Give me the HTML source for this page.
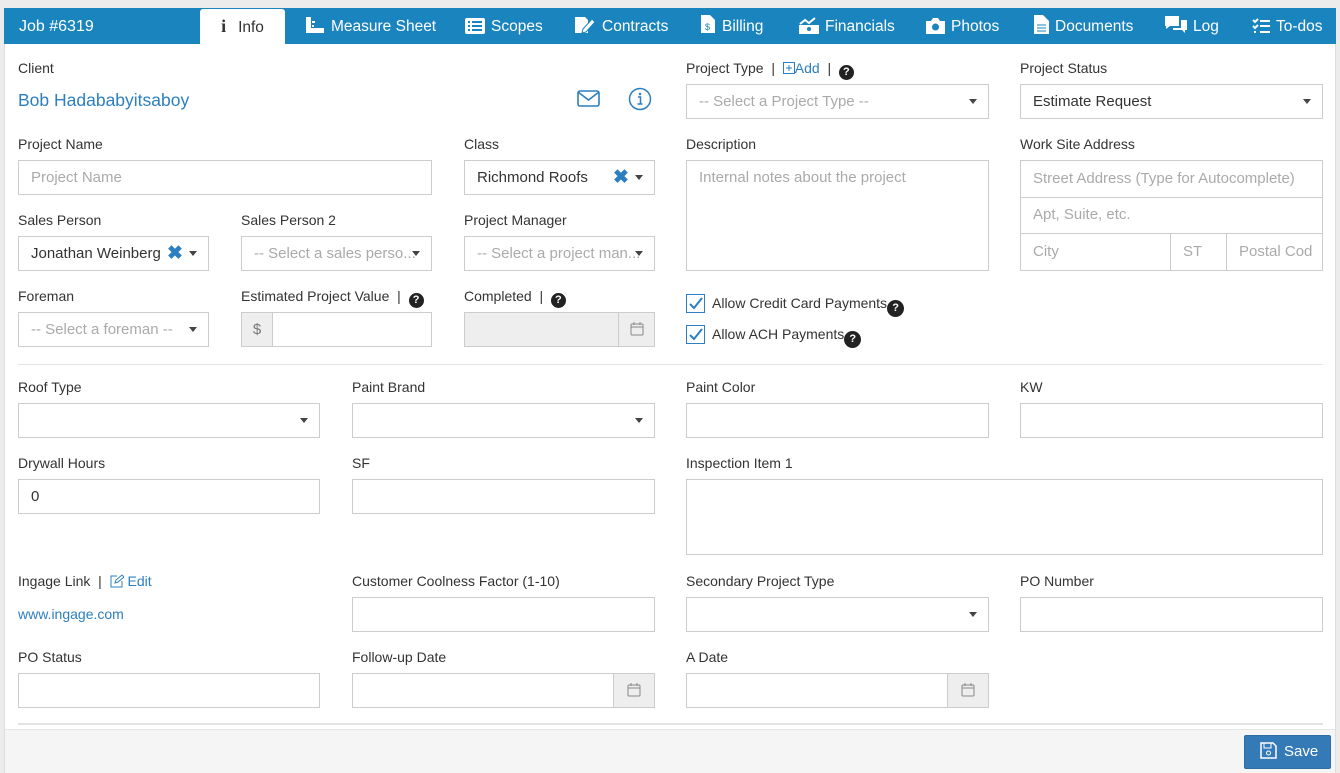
<!DOCTYPE html>
<html><head><style>
*{box-sizing:border-box;margin:0;padding:0}
body{width:1340px;height:773px;background:#ececec;font-family:"Liberation Sans",sans-serif;color:#333;position:relative;overflow:hidden}
.card{position:absolute;left:4px;top:8px;width:1332px;height:765px;background:#fff;border:1px solid #ddd}
.hdr{position:absolute;left:4px;top:8px;width:1332px;height:36px;background:#1a84bf}
.tab{position:absolute;top:8px;height:36px;line-height:37px;color:#fff;font-size:15.5px;white-space:nowrap}
.tab svg{vertical-align:-3px;margin-right:6px}
.info{background:#fff;color:#333;left:200px;width:85px;text-align:center;border-radius:3px 3px 0 0;top:9px;height:35px;line-height:35px}
.l{position:absolute;font-size:14px;color:#333;white-space:nowrap}
.i{position:absolute;height:35px;border:1px solid #ccc;background:#fff;font-size:15px;line-height:33px;padding-left:12px;color:#333;white-space:nowrap;overflow:hidden}
.ph{color:#aaa}
.car{position:absolute;right:11px;top:14px;width:0;height:0;border-left:4px solid transparent;border-right:4px solid transparent;border-top:5px solid #444}
.q{display:inline-block;width:15px;height:15px;border-radius:50%;background:#222;color:#fff;font-size:11px;font-weight:bold;text-align:center;line-height:15px;vertical-align:-2px}
.add{position:absolute;right:0;top:-1px;width:36px;height:35px;background:#eee;border-left:1px solid #ccc}
.add svg{position:absolute;left:11px;top:9px}
.hr{position:absolute;left:18px;width:1305px;height:1px;background:#e3e3e3}
.cb{position:absolute;width:19px;height:19px;border:1px solid #2c7fc0;background:#fff}
a{color:#2c7fc0;text-decoration:none}
</style></head><body>
<div class="card"></div>
<div class="hdr"></div>
<div class="tab" style="left:19px;font-size:16px">Job #6319</div>
<div class="tab info"><span style="font-family:'Liberation Serif',serif;font-weight:bold;font-size:18px;margin-right:12px">i</span>Info</div>
<div class="tab" style="left:305px"><svg width="20" height="18"><rect x="1" y="1" width="5" height="16" fill="#fff"/><rect x="1" y="12" width="18" height="5" fill="#fff"/><rect x="7" y="5" width="3" height="2" fill="#fff"/><rect x="7" y="9" width="2" height="2" fill="#fff"/></svg>Measure Sheet</div>
<div class="tab" style="left:465px"><svg width="20" height="16"><rect x="0" y="0" width="20" height="16" rx="2" fill="#fff"/><g fill="#1a84bf"><rect x="3" y="3" width="2" height="2"/><rect x="7" y="3" width="10" height="2"/><rect x="3" y="7" width="2" height="2"/><rect x="7" y="7" width="10" height="2"/><rect x="3" y="11" width="2" height="2"/><rect x="7" y="11" width="10" height="2"/></g></svg>Scopes</div>
<div class="tab" style="left:574px"><svg width="22" height="18"><path d="M1 1h10l3 3v13H1z" fill="#fff"/><path d="M9 13l9-10 3 3-9 10-4 1z" fill="#fff" stroke="#1a84bf"/></svg>Contracts</div>
<div class="tab" style="left:700px"><svg width="16" height="20"><path d="M1 1h9l5 5v13H1z" fill="#fff"/><text x="5" y="16" font-size="9" fill="#1a84bf" font-family="Liberation Sans">$</text></svg>Billing</div>
<div class="tab" style="left:799px"><svg width="20" height="18"><rect x="0" y="9" width="20" height="9" fill="#fff"/><path d="M1 8l5-4 4 3 6-5" stroke="#fff" stroke-width="2" fill="none"/><circle cx="10" cy="13" r="2" fill="#1a84bf"/></svg>Financials</div>
<div class="tab" style="left:926px"><svg width="19" height="16"><path d="M0 3h5l2-3h5l2 3h5v13H0z" fill="#fff"/><circle cx="9.5" cy="9" r="3.5" fill="#1a84bf"/></svg>Photos</div>
<div class="tab" style="left:1034px"><svg width="15" height="19"><path d="M0 0h9l6 6v13H0z" fill="#fff"/><path d="M3 10h9M3 13h9M3 16h9" stroke="#1a84bf"/></svg>Documents</div>
<div class="tab" style="left:1165px"><svg width="22" height="18"><path d="M0 0h14v10H5l-4 3v-3H0z" fill="#fff"/><path d="M16 4h6v10h-2v3l-3-3H8v-2h8z" fill="#fff"/></svg>Log</div>
<div class="tab" style="left:1252px"><svg width="18" height="16"><path d="M1 2l2 2 3-3M1 8l2 2 3-3M2 14h2M8 3h10M8 8h10M8 14h10" stroke="#fff" stroke-width="2" fill="none"/></svg>To-dos</div>

<div class="l" style="left:18px;top:60px">Client</div>
<div class="l" style="left:18px;top:90px;font-size:17.5px"><a>Bob Hadababyitsaboy</a></div>
<svg style="position:absolute;left:577px;top:90px" width="23" height="17"><rect x="1" y="1" width="21" height="15" rx="2" fill="none" stroke="#2c7fc0" stroke-width="1.6"/><path d="M1 2l10.5 8L22 2" fill="none" stroke="#2c7fc0" stroke-width="1.6"/></svg>
<svg style="position:absolute;left:628px;top:87px" width="24" height="24"><circle cx="12" cy="12" r="10.5" fill="none" stroke="#2c7fc0" stroke-width="1.5"/><circle cx="12" cy="7" r="1.3" fill="#2c7fc0"/><path d="M10 10h2.5v7M9.5 17h5" stroke="#2c7fc0" stroke-width="1.5" fill="none"/></svg>

<div class="l" style="left:686px;top:60px">Project Type &nbsp;| &nbsp;<a><svg width="12" height="12" style="vertical-align:-1px"><rect x=".5" y=".5" width="11" height="11" fill="none" stroke="#2c7fc0"/><path d="M6 3v6M3 6h6" stroke="#2c7fc0"/></svg>Add</a> &nbsp;| &nbsp;<span class="q">?</span></div>
<div class="i ph" style="left:686px;top:84px;width:303px">-- Select a Project Type --<span class="car"></span></div>
<div class="l" style="left:1020px;top:60px">Project Status</div>
<div class="i" style="left:1020px;top:84px;width:303px">Estimate Request<span class="car"></span></div>

<div class="l" style="left:18px;top:136px">Project Name</div>
<div class="i ph" style="left:18px;top:160px;width:414px">Project Name</div>
<div class="l" style="left:464px;top:136px">Class</div>
<div class="i" style="left:464px;top:160px;width:191px">Richmond Roofs<span style="position:absolute;left:148px;color:#2c7fc0;font-size:19px;font-weight:bold">✖</span><span class="car"></span></div>
<div class="l" style="left:686px;top:136px">Description</div>
<div class="i ph" style="left:686px;top:160px;width:303px;height:111px;line-height:34px">Internal notes about the project</div>
<div class="l" style="left:1020px;top:136px">Work Site Address</div>
<div class="i ph" style="left:1020px;top:160px;width:303px;height:38px;line-height:36px">Street Address (Type for Autocomplete)</div>
<div class="i ph" style="left:1020px;top:197px;width:303px;height:37px">Apt, Suite, etc.</div>
<div class="i ph" style="left:1020px;top:233px;width:151px;height:38px;line-height:36px">City</div>
<div class="i ph" style="left:1170px;top:233px;width:57px;height:38px;line-height:36px">ST</div>
<div class="i ph" style="left:1226px;top:233px;width:97px;height:38px;line-height:36px">Postal Cod</div>

<div class="l" style="left:18px;top:212px">Sales Person</div>
<div class="i" style="left:18px;top:236px;width:191px">Jonathan Weinberg<span style="position:absolute;left:148px;color:#2c7fc0;font-size:19px;font-weight:bold">✖</span><span class="car"></span></div>
<div class="l" style="left:241px;top:212px">Sales Person 2</div>
<div class="i ph" style="left:241px;top:236px;width:191px">-- Select a sales perso...<span class="car"></span></div>
<div class="l" style="left:464px;top:212px">Project Manager</div>
<div class="i ph" style="left:464px;top:236px;width:191px">-- Select a project man...<span class="car"></span></div>

<div class="l" style="left:18px;top:288px">Foreman</div>
<div class="i ph" style="left:18px;top:312px;width:191px">-- Select a foreman --<span class="car"></span></div>
<div class="l" style="left:241px;top:288px">Estimated Project Value &nbsp;| &nbsp;<span class="q">?</span></div>
<div class="i ph" style="left:241px;top:312px;width:191px;padding-left:0"><span style="display:inline-block;width:31px;height:33px;background:#eee;border-right:1px solid #ccc;text-align:center;color:#777">$</span></div>
<div class="l" style="left:464px;top:288px">Completed &nbsp;| &nbsp;<span class="q">?</span></div>
<div class="i" style="left:464px;top:312px;width:191px;background:#eee"><span class="add" style="background:#eee"><svg width="14" height="15"><rect x="1" y="3" width="12" height="11" rx="1" fill="none" stroke="#888"/><path d="M1 6h12M4 1v3M10 1v3" stroke="#888"/></svg></span></div>

<div class="cb" style="left:686px;top:294px"><svg width="17" height="17"><path d="M3 9l4 4 8-10" stroke="#2c7fc0" stroke-width="2" fill="none"/></svg></div>
<div class="l" style="left:712px;top:295px">Allow Credit Card Payments<span class="q" style="width:17px;height:17px;line-height:17px;vertical-align:-3px">?</span></div>
<div class="cb" style="left:686px;top:325px"><svg width="17" height="17"><path d="M3 9l4 4 8-10" stroke="#2c7fc0" stroke-width="2" fill="none"/></svg></div>
<div class="l" style="left:712px;top:326px">Allow ACH Payments<span class="q" style="width:17px;height:17px;line-height:17px;vertical-align:-3px">?</span></div>

<div class="hr" style="top:364px"></div>

<div class="l" style="left:18px;top:379px">Roof Type</div>
<div class="i" style="left:18px;top:403px;width:302px"><span class="car"></span></div>
<div class="l" style="left:352px;top:379px">Paint Brand</div>
<div class="i" style="left:352px;top:403px;width:303px"><span class="car"></span></div>
<div class="l" style="left:686px;top:379px">Paint Color</div>
<div class="i" style="left:686px;top:403px;width:303px"></div>
<div class="l" style="left:1020px;top:379px">KW</div>
<div class="i" style="left:1020px;top:403px;width:303px"></div>

<div class="l" style="left:18px;top:455px">Drywall Hours</div>
<div class="i" style="left:18px;top:479px;width:302px">0</div>
<div class="l" style="left:352px;top:455px">SF</div>
<div class="i" style="left:352px;top:479px;width:303px"></div>
<div class="l" style="left:686px;top:455px">Inspection Item 1</div>
<div class="i" style="left:686px;top:479px;width:637px;height:76px"></div>

<div class="l" style="left:18px;top:573px">Ingage Link &nbsp;| &nbsp;<a><svg width="14" height="14" style="vertical-align:-2px"><path d="M12 7v6H1V2h6" fill="none" stroke="#2c7fc0"/><path d="M5 9l1-3 6-5 2 2-6 5z" fill="none" stroke="#2c7fc0"/></svg> Edit</a></div>
<div class="l" style="left:18px;top:606px"><a>www.ingage.com</a></div>
<div class="l" style="left:352px;top:573px">Customer Coolness Factor (1-10)</div>
<div class="i" style="left:352px;top:597px;width:303px"></div>
<div class="l" style="left:686px;top:573px">Secondary Project Type</div>
<div class="i" style="left:686px;top:597px;width:303px"><span class="car"></span></div>
<div class="l" style="left:1020px;top:573px">PO Number</div>
<div class="i" style="left:1020px;top:597px;width:303px"></div>

<div class="l" style="left:18px;top:649px">PO Status</div>
<div class="i" style="left:18px;top:673px;width:302px"></div>
<div class="l" style="left:352px;top:649px">Follow-up Date</div>
<div class="i" style="left:352px;top:673px;width:303px"><span class="add" style="width:41px"><svg width="14" height="15" style="left:13px"><rect x="1" y="3" width="12" height="11" rx="1" fill="none" stroke="#888"/><path d="M1 6h12M4 1v3M10 1v3" stroke="#888"/></svg></span></div>
<div class="l" style="left:686px;top:649px">A Date</div>
<div class="i" style="left:686px;top:673px;width:303px"><span class="add" style="width:41px"><svg width="14" height="15" style="left:13px"><rect x="1" y="3" width="12" height="11" rx="1" fill="none" stroke="#888"/><path d="M1 6h12M4 1v3M10 1v3" stroke="#888"/></svg></span></div>

<div class="hr" style="top:723px;height:2px"></div>
<div style="position:absolute;left:5px;top:729px;width:1330px;height:44px;background:#f5f5f5;border-top:1px solid #e5e5e5"></div>
<div style="position:absolute;left:1244px;top:735px;width:87px;height:34px;background:#337ab7;border:1px solid #2e6da4;border-radius:2px;color:#fff;font-size:15px;line-height:32px;padding-left:15px"><svg width="17" height="17" style="vertical-align:-3px;margin-right:7px"><path d="M1 1h12l3 3v12H1z" fill="none" stroke="#fff" stroke-width="1.5"/><rect x="4" y="1" width="7" height="5" fill="none" stroke="#fff"/><circle cx="8.5" cy="11" r="2" fill="none" stroke="#fff"/></svg>Save</div>
</body></html>
